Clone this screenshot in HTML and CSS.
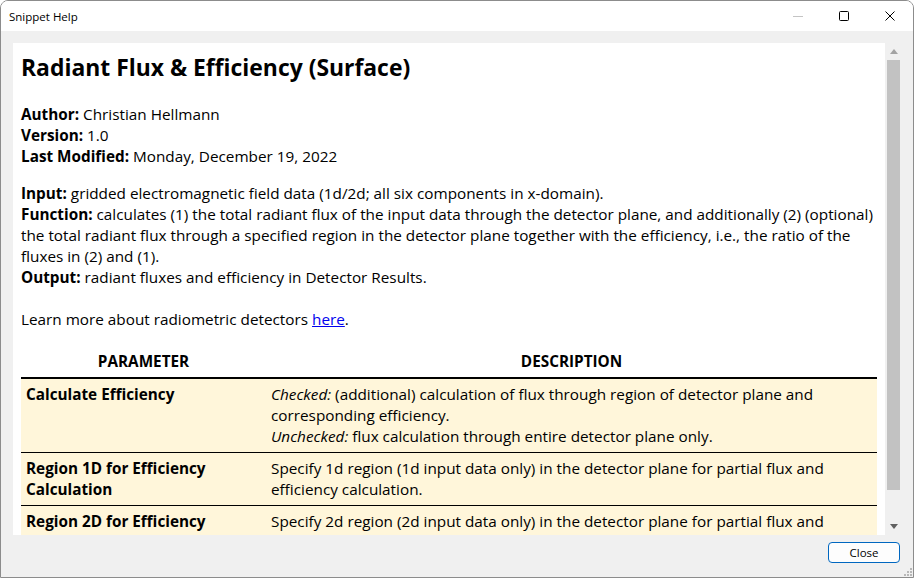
FILE: index.html
```html
<!DOCTYPE html>
<html>
<head>
<meta charset="UTF-8">
<title>Snippet Help</title>
<link rel="stylesheet" href="styles.css">
</head>
<body>
<div class="window">
	<div class="titlebar">
		<span class="caption">Snippet Help</span>
		<div class="caption-buttons">
			<span class="cap-btn">
				<svg width="10" height="10" viewBox="0 0 10 10"><path d="M0 5.5h10" stroke="#c4c4c4" stroke-width="1"/></svg>
			</span>
			<span class="cap-btn">
				<svg width="10" height="10" viewBox="0 0 10 10"><rect x="0.5" y="0.5" width="9" height="9" rx="1" fill="none" stroke="#000" stroke-width="1"/></svg>
			</span>
			<span class="cap-btn">
				<svg width="10" height="10" viewBox="0 0 10 10"><path d="M0.5 0.5l9 9M9.5 0.5l-9 9" stroke="#000" stroke-width="1"/></svg>
			</span>
		</div>
	</div>

	<div class="client">
		<div class="panel">
			<div class="doc">
				<h1>Radiant Flux &amp; Efficiency (Surface)</h1>
				<p>
					<b>Author:</b> Christian Hellmann<br>
					<b>Version:</b> 1.0<br>
					<b>Last Modified:</b> Monday, December 19, 2022
				</p>
				<p>
					<b>Input:</b> gridded electromagnetic field data (1d/2d; all six components in x-domain).<br>
					<b>Function:</b> calculates (1) the total radiant flux of the input data through the detector plane, and additionally (2) (optional) the total radiant flux through a specified region in the detector plane together with the efficiency, i.e., the ratio of the fluxes in (2) and (1).<br>
					<b>Output:</b> radiant fluxes and efficiency in Detector Results.<br>
					<br>
					Learn more about radiometric detectors <a href="#">here</a>.
				</p>
				<table class="params">
					<thead>
						<tr><th class="col-name">PARAMETER</th><th>DESCRIPTION</th></tr>
					</thead>
					<tbody>
						<tr>
							<td class="col-name">Calculate Efficiency</td>
							<td><i>Checked:</i> (additional) calculation of flux through region of detector plane and corresponding efficiency.<br><i>Unchecked:</i> flux calculation through entire detector plane only.</td>
						</tr>
						<tr>
							<td class="col-name">Region 1D for Efficiency Calculation</td>
							<td>Specify 1d region (1d input data only) in the detector plane for partial flux and efficiency calculation.</td>
						</tr>
						<tr>
							<td class="col-name">Region 2D for Efficiency Calculation</td>
							<td>Specify 2d region (2d input data only) in the detector plane for partial flux and efficiency calculation.</td>
						</tr>
					</tbody>
				</table>
			</div>
			<div class="vscroll">
				<svg class="arrow" width="8" height="5" viewBox="0 0 8 5"><path d="M4 0L8 5H0z" fill="#a3a3a3"/></svg>
				<div class="thumb"></div>
				<svg class="arrow" width="8" height="5" viewBox="0 0 8 5"><path d="M0 0h8L4 5z" fill="#606060"/></svg>
			</div>
		</div>
		<div class="footer">
			<button class="btn-close">Close</button>
		</div>
		<svg class="grip" width="10" height="10" viewBox="0 0 10 10">
			<g fill="#b8b8b8">
				<rect x="8" y="2" width="2" height="2"/>
				<rect x="5" y="5" width="2" height="2"/><rect x="8" y="5" width="2" height="2"/>
				<rect x="2" y="8" width="2" height="2"/><rect x="5" y="8" width="2" height="2"/><rect x="8" y="8" width="2" height="2"/>
			</g>
		</svg>
	</div>
</div>
</body>
</html>
```

FILE: styles.css
```css
html, body {
	margin: 0;
	height: 100%;
}
body {
	font-family: "Open Sans", "Noto Sans", sans-serif;
	color: #000;
	background: #fff;
}

.window {
	box-sizing: border-box;
	height: 578px;
	border: 1px solid #8c8c8c;
	border-radius: 8px 8px 0 0;
	display: flex;
	flex-direction: column;
	overflow: hidden;
}

/* title bar */
.titlebar {
	height: 30px;
	display: flex;
	align-items: center;
	background: #fff;
}
.caption {
	padding-left: 8px;
	font-size: 11.5px;
	flex: 1;
}
.caption-buttons {
	display: flex;
	height: 100%;
}
.cap-btn {
	width: 46px;
	display: flex;
	align-items: center;
	justify-content: center;
}

/* dialog body */
.client {
	flex: 1;
	background: #f0f0f0;
	display: flex;
	flex-direction: column;
	padding: 12px 11px 0 12px;
	position: relative;
}
.panel {
	height: 492px;
	background: #fff;
	display: flex;
}
.doc {
	flex: 1;
	overflow: hidden;
	padding: 0 8px;
	font-size: 15.3px;
	line-height: 21px;
}
.doc h1 {
	font-size: 22.9px;
	font-weight: 700;
	margin: 10px 0 21px;
	line-height: 30px;
}
.doc p {
	margin: 0 0 16px;
}
.doc a {
	color: #0000ee;
}

/* parameter table */
.params {
	width: 100%;
	border-collapse: collapse;
}
.params th {
	font-weight: 700;
	padding: 5px;
	border-bottom: 2px solid #000;
	text-align: center;
}
.params td {
	background: #fff6da;
	padding: 5px;
	vertical-align: top;
	border-bottom: 1px solid #000;
}
.params .col-name {
	width: 235px;
}
.params td.col-name {
	font-weight: 700;
}

/* scrollbar */
.vscroll {
	width: 17px;
	background: #f0f0f0;
	display: flex;
	flex-direction: column;
	align-items: center;
}
.vscroll .arrow {
	margin: 6px 0;
}
.vscroll .thumb {
	width: 13px;
	height: 430px;
	background: #c2c2c2;
	margin-bottom: auto;
}

.footer {
	display: flex;
	justify-content: flex-end;
	padding: 7px 2px 0 0;
}
.btn-close {
	width: 72px;
	height: 21px;
	font-family: "Open Sans", "Noto Sans", sans-serif;
	font-size: 11.5px;
	background: #fdfdfd;
	border: 1px solid #0067c0;
	border-radius: 4px;
	padding: 0;
	color: #000;
}
.grip {
	position: absolute;
	right: 1px;
	bottom: 1px;
}
```
